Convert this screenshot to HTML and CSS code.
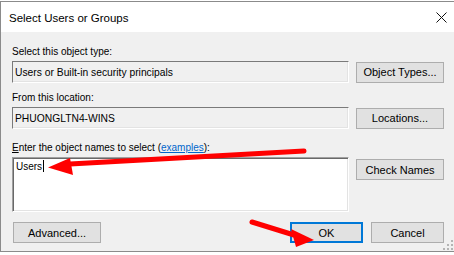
FILE: index.html
```html
<!DOCTYPE html>
<html>
<head>
<meta charset="utf-8">
<link rel="stylesheet" href="styles.css">
</head>
<body>
<div class="dialog">
  <div class="titlebar">
    <span class="title">Select Users or Groups</span>
    <svg class="close" width="11" height="11" viewBox="0 0 11 11"><path d="M0.5 0.5 L10.5 10.5 M10.5 0.5 L0.5 10.5" stroke="#111" stroke-width="1"/></svg>
  </div>
  <div class="content">
    <div class="label">Select this object type:</div>
    <div class="row">
      <div class="field">Users or Built-in security principals</div>
      <div class="btn">Object Types...</div>
    </div>
    <div class="label l2">From this location:</div>
    <div class="row">
      <div class="field">PHUONGLTN4-WINS</div>
      <div class="btn">Locations...</div>
    </div>
    <div class="label l3"><u>E</u>nter the object names to select (<a class="link">examples</a>):</div>
    <div class="row top">
      <div class="area">Users<span class="caret"></span></div>
      <div class="btn check">Check Names</div>
    </div>
    <div class="footer">
      <div class="btn adv">Advanced...</div>
      <div class="btn ok">OK</div>
      <div class="btn cancel">Cancel</div>
    </div>
  </div>
  <svg class="grip" width="12" height="12" viewBox="0 0 12 12">
    <rect x="9" y="1" width="2" height="2" fill="#b4b4b4"/>
    <rect x="5" y="5" width="2" height="2" fill="#b4b4b4"/>
    <rect x="9" y="5" width="2" height="2" fill="#b4b4b4"/>
    <rect x="1" y="9" width="2" height="2" fill="#b4b4b4"/>
    <rect x="5" y="9" width="2" height="2" fill="#b4b4b4"/>
    <rect x="9" y="9" width="2" height="2" fill="#b4b4b4"/>
  </svg>
</div>
<svg class="annot" width="454" height="255" viewBox="0 0 454 255">
  <line x1="304" y1="151" x2="70" y2="164" stroke="#f00" stroke-width="5" stroke-linecap="round"/>
  <polygon points="48,167.5 70,158 73,175" fill="#f00"/>
  <line x1="252" y1="222" x2="294" y2="235" stroke="#f00" stroke-width="5" stroke-linecap="round"/>
  <polygon points="314,240 291,229 296,247" fill="#f00"/>
</svg>
</body>
</html>
```
FILE: styles.css
```css
html, body {
  margin: 0;
  padding: 0;
  background: #fff;
  width: 454px;
  height: 255px;
  overflow: hidden;
  position: relative;
  font-family: "Liberation Sans", Arial, sans-serif;
}

.dialog {
  margin-top: 1px;
  width: 460px;
  height: 251px;
  box-sizing: border-box;
  border: 1px solid #8b8b8b;
  background: #f0f0f0;
  display: flex;
  flex-direction: column;
  position: relative;
}

.titlebar {
  height: 30px;
  flex: none;
  background: #fff;
  display: flex;
  align-items: center;
  padding-left: 8px;
}

.title {
  font-size: 11.5px;
  color: #000;
  padding-top: 1px;
}

.close {
  margin-left: auto;
  margin-right: 12px;
  display: block;
}

.content {
  padding: 13px 0 0 11px;
  display: flex;
  flex-direction: column;
}

.label {
  font-size: 10px;
  line-height: 13px;
  height: 13px;
  color: #000;
}

.l2 { margin-top: 8px; }
.l3 { margin-top: 12px; }

.label u {
  text-decoration: underline;
}

.link {
  color: #0066cc;
  text-decoration: underline;
}

.row {
  display: flex;
  align-items: center;
  gap: 7px;
  margin-top: 3px;
}

.row.top {
  align-items: flex-start;
}

.field {
  width: 337px;
  height: 22px;
  box-sizing: border-box;
  border: 1px solid;
  border-color: #7a7a7a #ffffff #ffffff #7a7a7a;
  box-shadow: inset -1px -1px 0 #e3e3e3;
  display: flex;
  align-items: center;
  padding-left: 2px;
  font-size: 10.3px;
  line-height: 13px;
  color: #000;
}

.area {
  width: 337px;
  height: 55px;
  box-sizing: border-box;
  background: #fff;
  border: 1px solid;
  border-color: #a0a0a0 #ffffff #ffffff #a0a0a0;
  box-shadow: inset 1px 1px 0 #696969, inset -1px -1px 0 #e3e3e3;
  padding: 2px 0 0 3px;
  font-size: 10px;
  line-height: 13px;
  color: #000;
  display: flex;
  align-items: flex-start;
}

.caret {
  display: inline-block;
  width: 1px;
  height: 12px;
  background: #000;
  margin-left: 1px;
}

.btn {
  width: 88px;
  height: 21px;
  box-sizing: border-box;
  background: #e1e1e1;
  border: 1px solid #adadad;
  display: flex;
  align-items: center;
  justify-content: center;
  font-size: 11px;
  color: #000;
  flex: none;
}

.check {
  margin-top: 2px;
}

.footer {
  display: flex;
  margin-top: 10px;
  padding-left: 1px;
}

.adv {
  width: 88px;
}

.ok {
  margin-left: auto;
  width: 73px;
  border: 2px solid #0078d7;
}

.cancel {
  width: 73px;
  margin-left: 8px;
  margin-right: 15px;
}

.grip {
  position: absolute;
  right: 5px;
  bottom: 0px;
}

.annot {
  position: absolute;
  left: 0;
  top: 0;
  pointer-events: none;
}
```
